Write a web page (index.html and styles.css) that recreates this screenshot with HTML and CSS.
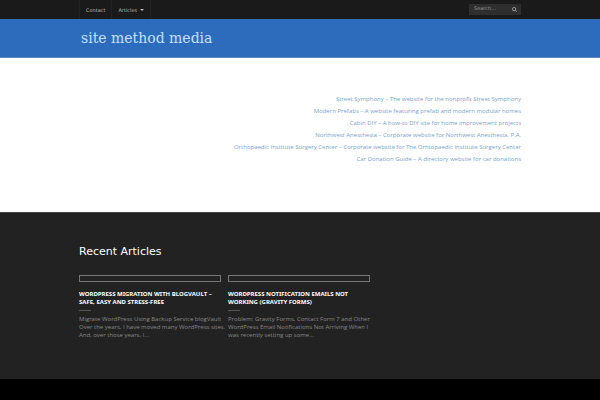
FILE: index.html
```
<!DOCTYPE html>
<html lang="en">
<head>
    <meta charset="UTF-8">
    <meta name="viewport" content="width=device-width, initial-scale=1.0">
    <title>Site Method Media</title>
    <link rel="stylesheet" href="styles.css">
</head>
<body>
    <div class="topbar">
        <div class="container topbar-inner">
            <nav class="menu">
                <a href="#">Contact</a>
                <a href="#">Articles <span class="arrow"></span></a>
            </nav>
            <form class="search">
                <input type="text" placeholder="Search..." aria-label="Search">
                <button type="submit" aria-label="Submit search">
                    <svg viewBox="0 0 12 12"><circle cx="5" cy="5" r="4"/><path d="M8 8L11.5 11.5"/></svg>
                </button>
            </form>
        </div>
    </div>
    <header class="header">
        <div class="container">
            <a class="logo" href="#">site method media</a>
        </div>
    </header>
    <main class="main">
        <div class="container">
            <ul class="sites">
                <li><a href="#">Street Symphony – The website for the nonprofit Street Symphony</a></li>
                <li><a href="#">Modern Prefabs – A website featuring prefab and modern modular homes</a></li>
                <li><a href="#">Cabin DIY – A how-to DIY site for home improvement projects</a></li>
                <li><a href="#">Northwest Anesthesia – Corporate website for Northwest Anesthesia, P.A.</a></li>
                <li><a href="#">Orthopaedic Institute Surgery Center – Corporate website for The Orhtopaedic Institute Surgery Center</a></li>
                <li><a href="#">Car Donation Guide – A directory website for car donations</a></li>
            </ul>
        </div>
    </main>
    <section class="articles">
        <div class="container">
            <h2>Recent Articles</h2>
            <div class="article-grid">
                <article>
                    <a class="thumb" href="#" aria-label="WordPress Migration"></a>
                    <h3>WordPress Migration with BlogVault – Safe, Easy and Stress-Free</h3>
                    <p>Migrate WordPress Using Backup Service blogVault Over the years, I have moved many WordPress sites. And, over those years, I...</p>
                </article>
                <article>
                    <a class="thumb" href="#" aria-label="WordPress Notification Emails"></a>
                    <h3>WordPress Notification Emails Not Working (Gravity Forms)</h3>
                    <p>Problem: Gravity Forms, Contact Form 7 and Other WordPress Email Notifications Not Arriving When I was recently setting up some...</p>
                </article>
            </div>
        </div>
    </section>
</body>
</html>
```
FILE: styles.css
```
* {
    box-sizing: border-box;
}
body {
    margin: 0;
    font-family: "DejaVu Sans", sans-serif;
    font-size: 5px;
    line-height: 8px;
    background-color: #000;
    color: #888;
}
a {
    text-decoration: none;
}
.container {
    max-width: 442px;
    margin: 0 auto;
}
.topbar {
    background-color: #1a1a1a;
}
.topbar-inner {
    display: flex;
    justify-content: space-between;
    align-items: flex-start;
}
.menu {
    display: flex;
    border-left: 1px solid #222;
}
.menu a {
    display: flex;
    align-items: center;
    gap: 3px;
    height: 19px;
    padding: 0 6px;
    border-right: 1px solid #222;
    color: #bbb;
}
.arrow {
    border: 2px solid transparent;
    border-top-color: #bbb;
    border-bottom: 0;
}
.search {
    display: flex;
    width: 52px;
    height: 11px;
    margin-top: 4px;
    background-color: #2e2e2e;
}
.search input {
    flex: 1;
    min-width: 0;
    height: 7px;
    padding: 0 0 0 5px;
    border: 0;
    background: none;
    font: inherit;
    color: #999;
}
.search input::placeholder {
    color: #999;
}
.search button {
    display: flex;
    align-items: center;
    padding: 0 4px;
    border: 0;
    background: none;
}
.search svg {
    width: 5px;
    height: 5px;
    fill: none;
    stroke: #aaa;
    stroke-width: 2;
}
.header {
    padding: 8px 2px 7px;
    background-color: #2d6cbc;
    border-bottom: 1px solid #5a8ac8;
}
.logo {
    display: block;
    padding-left: 2px;
    font-family: "DejaVu Serif", serif;
    font-size: 14px;
    line-height: 23px;
    color: #c4e0fa;
}
.main {
    padding: 35px 0 47px;
    background-color: #fff;
}
.sites {
    margin: 0;
    padding: 0;
    list-style: none;
    text-align: right;
    font-family: "Open Sans", sans-serif;
    font-size: 6px;
    line-height: 12px;
}
.sites a {
    color: #7ba3cc;
}
.articles {
    padding: 32px 0 40px;
    background-color: #222;
    border-top: 1px solid #444;
}
.articles h2 {
    margin: 0 0 16px;
    font-size: 11px;
    font-weight: normal;
    line-height: 14px;
    color: #fff;
}
.article-grid {
    display: grid;
    grid-template-columns: repeat(3, 1fr);
    gap: 7px;
    padding-right: 2px;
    font-family: "Open Sans", sans-serif;
    font-size: 6px;
}
.thumb {
    display: block;
    height: 7px;
    margin-bottom: 8px;
    border: 1px solid #777;
}
.article-grid h3 {
    margin: 0;
    padding-right: 8px;
    font-family: "Noto Sans", sans-serif;
    font-size: 6px;
    text-transform: uppercase;
    color: #fff;
}
.article-grid h3::after {
    content: "";
    display: block;
    width: 12px;
    margin: 4px 0;
    border-top: 1px solid #555;
}
.article-grid p {
    margin: 0 -6px 0 0;
}
```
